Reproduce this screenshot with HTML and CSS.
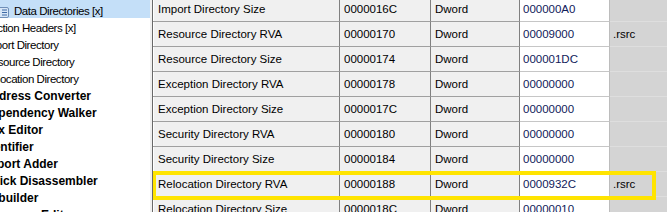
FILE: index.html
```
<!DOCTYPE html>
<html>
<head>
<meta charset="utf-8">
<title>Data Directories</title>
<link rel="stylesheet" href="styles.css">
</head>
<body>
<div class="app">
  <nav class="tree">
    <div class="tree-scroll">
      <div class="node deep selected">
        <svg class="node-icon" viewBox="0 0 16 16" aria-hidden="true">
          <rect x="1.5" y="3.5" width="13" height="10" rx="1.5" fill="#d7e6f6" stroke="#6f8fb8"/>
          <rect x="3" y="5" width="3" height="7" fill="#a9c3e3"/>
          <line x1="8" y1="6" x2="13" y2="6" stroke="#3e6aa6"/>
          <line x1="8" y1="8.5" x2="13" y2="8.5" stroke="#3e6aa6"/>
          <line x1="8" y1="11" x2="13" y2="11" stroke="#3e6aa6"/>
        </svg>
        <span>Data Directories [x]</span>
      </div>
      <div class="node mid">Section Headers [x]</div>
      <div class="node mid">Import Directory</div>
      <div class="node mid">Resource Directory</div>
      <div class="node mid">Relocation Directory</div>
      <div class="node tool">Address Converter</div>
      <div class="node tool">Dependency Walker</div>
      <div class="node tool">Hex Editor</div>
      <div class="node tool">Identifier</div>
      <div class="node tool">Import Adder</div>
      <div class="node tool">Quick Disassembler</div>
      <div class="node tool">Rebuilder</div>
      <div class="node tool">Resource Editor</div>
      <div class="node tool">UPX Utility</div>
    </div>
  </nav>
  <div class="splitter"></div>
  <div class="grid-frame">
    <div class="grid">
      <div class="row"><div class="cell c1">Import Directory Size</div><div class="cell c2">0000016C</div><div class="cell c3">Dword</div><div class="cell c4">000000A0</div><div class="cell c5"></div></div>
      <div class="row"><div class="cell c1">Resource Directory RVA</div><div class="cell c2">00000170</div><div class="cell c3">Dword</div><div class="cell c4">00009000</div><div class="cell c5">.rsrc</div></div>
      <div class="row"><div class="cell c1">Resource Directory Size</div><div class="cell c2">00000174</div><div class="cell c3">Dword</div><div class="cell c4">000001DC</div><div class="cell c5"></div></div>
      <div class="row"><div class="cell c1">Exception Directory RVA</div><div class="cell c2">00000178</div><div class="cell c3">Dword</div><div class="cell c4">00000000</div><div class="cell c5"></div></div>
      <div class="row"><div class="cell c1">Exception Directory Size</div><div class="cell c2">0000017C</div><div class="cell c3">Dword</div><div class="cell c4">00000000</div><div class="cell c5"></div></div>
      <div class="row"><div class="cell c1">Security Directory RVA</div><div class="cell c2">00000180</div><div class="cell c3">Dword</div><div class="cell c4">00000000</div><div class="cell c5"></div></div>
      <div class="row"><div class="cell c1">Security Directory Size</div><div class="cell c2">00000184</div><div class="cell c3">Dword</div><div class="cell c4">00000000</div><div class="cell c5"></div></div>
      <div class="row marked"><div class="cell c1">Relocation Directory RVA</div><div class="cell c2">00000188</div><div class="cell c3">Dword</div><div class="cell c4">0000932C</div><div class="cell c5">.rsrc</div></div>
      <div class="row"><div class="cell c1">Relocation Directory Size</div><div class="cell c2">0000018C</div><div class="cell c3">Dword</div><div class="cell c4">00000010</div><div class="cell c5"></div></div>
    </div>
  </div>
</div>
</body>
</html>
```

FILE: styles.css
```
html, body {
  margin: 0;
  padding: 0;
}

body {
  width: 667px;
  height: 212px;
  overflow: hidden;
  background: #f0f0f0;
  font-family: "Liberation Sans", Arial, sans-serif;
  color: #000;
}

.app {
  display: flex;
  height: 212px;
}

/* left tree */
.tree {
  width: 150px;
  flex: none;
  background: #fff;
  overflow: hidden;
}

.tree-scroll {
  margin-left: -40px;
}

.node {
  box-sizing: border-box;
  display: flex;
  align-items: center;
  height: 17px;
  line-height: 17px;
  white-space: nowrap;
  font-size: 11.5px;
  letter-spacing: -0.45px;
}

.node.selected {
  height: 20px;
  padding-top: 3px;
  background: linear-gradient(#c4dff8 18px, transparent 18px);
}

.node-icon {
  width: 16px;
  height: 16px;
  flex: none;
  margin-right: 4px;
}

.deep {
  padding-left: 34px;
}

.mid {
  padding-left: 24px;
}

.tool {
  padding-left: 23px;
  font-size: 12px;
  font-weight: bold;
  letter-spacing: 0;
}

.splitter {
  width: 2px;
  flex: none;
  background: #f0f0f0;
}

/* right grid */
.grid-frame {
  flex: 1;
  border-left: 1px solid #696969;
  overflow: hidden;
}

.grid {
  margin-top: -3px;
}

.row {
  display: grid;
  grid-template-columns: 187px 91px 89px 90px 1fr;
  height: 25px;
  font-size: 11.5px;
}

.cell {
  box-sizing: border-box;
  height: 25px;
  padding-top: 1px;
  line-height: 23px;
  white-space: nowrap;
  overflow: hidden;
  background: #f0f0f0;
  border-bottom: 1px solid #a0a0a0;
  border-right: 1px solid #808080;
}

.c1 {
  padding-left: 5px;
  box-shadow: inset 1px 0 #ffffff;
}

.c2,
.c3 {
  padding-left: 4px;
}

.c4 {
  padding-left: 3px;
  background: #ffffff;
  color: #10205a;
  border-bottom-color: #c6c6c6;
  border-right-color: #bcbcbc;
}

.c5 {
  padding-left: 3px;
  background: #d4d4d4;
  border-bottom-color: #dedede;
  border-right: none;
}

.row.marked {
  position: relative;
}

.row.marked::after {
  content: "";
  position: absolute;
  left: -1px;
  top: -1px;
  width: 504px;
  height: 29px;
  box-sizing: border-box;
  border: 4px solid #ffe400;
  pointer-events: none;
}
```
